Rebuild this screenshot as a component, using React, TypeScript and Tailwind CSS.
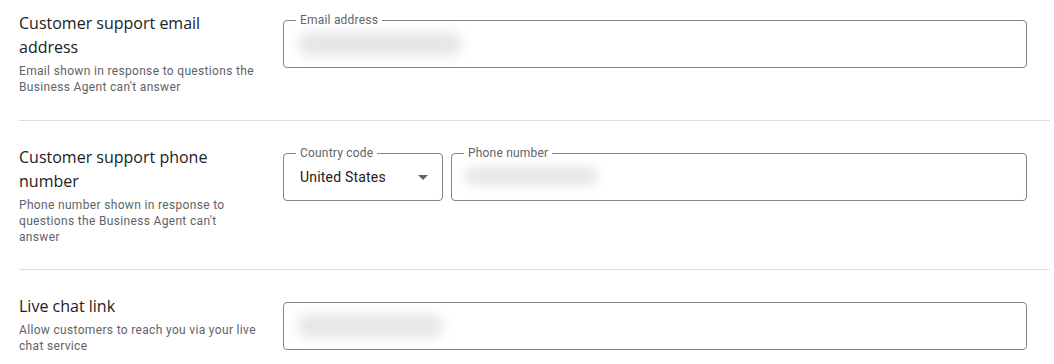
import { ReactNode } from 'react'

function Field({ label, className = '', children }: { label?: string; className?: string; children?: ReactNode }) {
  return (
    <div className={`relative h-12 rounded border border-[#80868b] ${className}`}>
      {label && (
        <span className="absolute -top-[9px] left-3 bg-white px-1 text-[12px] leading-4 tracking-[0.2px] text-[#5f6368]">
          {label}
        </span>
      )}
      {children}
    </div>
  )
}

function Blur({ className }: { className: string }) {
  // redacted value in the screenshot
  return <div className={`absolute rounded-full bg-[#e6e6e6] blur-[6px] ${className}`}></div>
}

function Section({
  title,
  desc,
  first,
  last,
  children,
}: {
  title: string
  desc: string
  first?: boolean
  last?: boolean
  children: ReactNode
}) {
  return (
    <section
      className={`flex ${first ? 'pt-[11px] pb-[25px]' : 'pt-6 pb-6'} ${last ? '' : 'border-b border-[#dadce0]'}`}
    >
      <div className="w-[264px] shrink-0">
        <div className="w-[240px]">
          <h3
            className="text-[16px] font-medium leading-6 text-[#202124]"
            style={{ fontFamily: '"Open Sans", Roboto, sans-serif' }}
          >
            {title}
          </h3>
          <p className="mt-1 text-[12px] leading-4 tracking-[0.33px] text-[#5f6368]">{desc}</p>
        </div>
      </div>
      <div className={`flex-1 pr-[23px] ${first ? 'mt-[9px]' : 'mt-2'}`}>{children}</div>
    </section>
  )
}

export default function App() {
  return (
    <div
      className="w-[1054px] h-[364px] overflow-hidden bg-white pl-[19px] pr-[4px]"
      style={{ fontFamily: 'Roboto, "Liberation Sans", sans-serif' }}
    >
      <Section
        first
        title="Customer support email address"
        desc="Email shown in response to questions the Business Agent can't answer"
      >
        <Field label="Email address">
          <Blur className="left-[14px] top-[11px] h-[24px] w-[164px]" />
        </Field>
      </Section>

      <Section
        title="Customer support phone number"
        desc="Phone number shown in response to questions the Business Agent can't answer"
      >
        <div className="flex gap-2">
          <Field label="Country code" className="w-[160px] shrink-0">
            <div className="flex h-full items-center justify-between pl-4 pr-[14px]">
              <span className="text-[14px] tracking-[0.2px] text-[#202124]">United States</span>
              <svg width="10" height="5" viewBox="0 0 10 5">
                <path d="M0 0h10L5 5z" fill="#5f6368" />
              </svg>
            </div>
          </Field>
          <Field label="Phone number" className="flex-1">
            <Blur className="left-[12px] top-[13px] h-[18px] w-[134px]" />
          </Field>
        </div>
      </Section>

      <Section
        last
        title="Live chat link"
        desc="Allow customers to reach you via your live chat service"
      >
        <Field>
          <Blur className="left-[13px] top-[11px] h-[24px] w-[146px]" />
        </Field>
      </Section>
    </div>
  )
}
